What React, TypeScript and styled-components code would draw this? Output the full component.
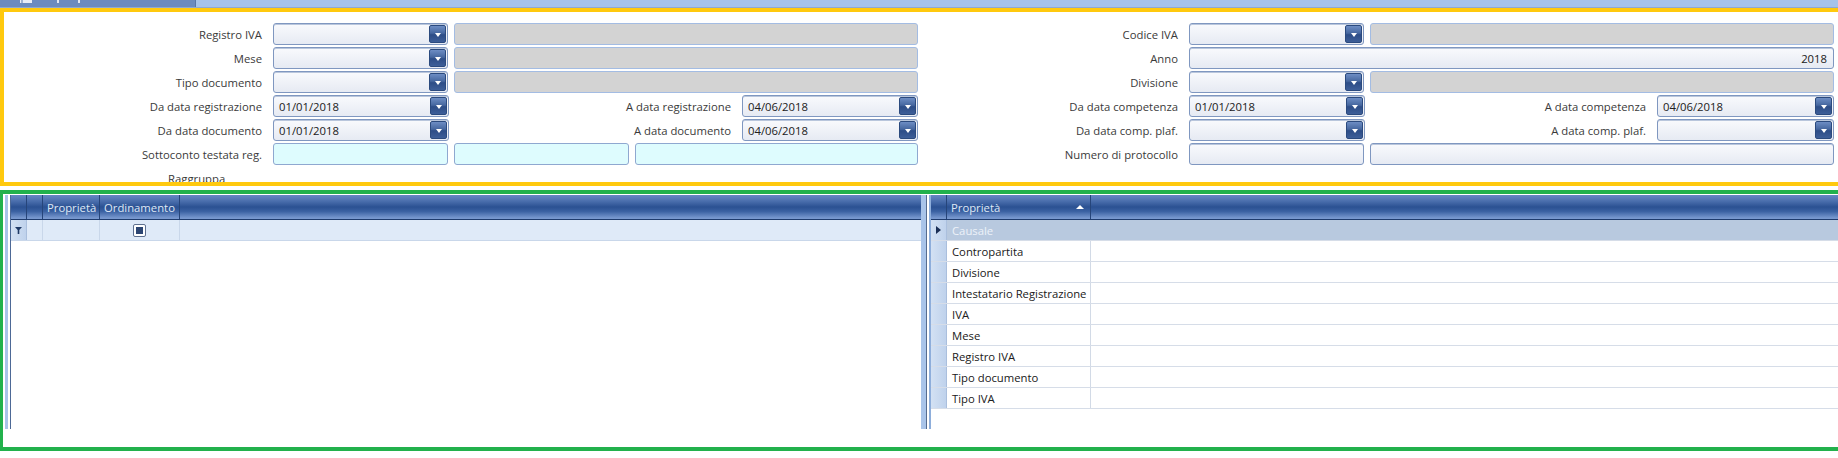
import styled, { createGlobalStyle } from "styled-components";

const GlobalStyle = createGlobalStyle`
  html, body {
    margin: 0;
    padding: 0;
    background: #ffffff;
    overflow: hidden;
  }
  body {
    font-family: "Open Sans", "Noto Sans", sans-serif;
    font-size: 11.3px;
    color: #333333;
  }
`;

const ui = {
  yellow: "#ffc90e",
  green: "#22b14c",
  label: "#3a3a3a",
  text: "#202020",
  headerText: "#dfe8f5",
  navy: "#26457a",
};

type Tone = "combo" | "gray" | "cyan" | "plain";

const Page = styled.div`
  width: 1838px;
  height: 458px;
  display: flex;
  flex-direction: column;
`;

const TabStrip = styled.div`
  height: 8px;
  flex: none;
  display: flex;
  background: #a6c3ea;
  border-bottom: 1px solid #8ea9d2;
  box-sizing: border-box;
`;

const Tab = styled.div`
  width: 195px;
  background: #6b8bbf;
  border-right: 1px solid #5876a8;
  display: flex;
  align-items: flex-start;
`;

const FilterPanel = styled.div`
  position: relative;
  height: 182px;
  flex: none;
  box-sizing: border-box;
  padding: 15px 0 0 4px;
  overflow: hidden;

  &::after {
    content: "";
    position: absolute;
    left: 0;
    top: 0;
    right: -10px;
    bottom: 4px;
    border: 4px solid ${ui.yellow};
    pointer-events: none;
  }
`;

const Halves = styled.div`
  display: grid;
  grid-template-columns: 914px 914px;
  column-gap: 2px;
`;

const FormHalf = styled.div`
  display: grid;
  grid-template-columns: 258px 645px;
  column-gap: 11px;
  row-gap: 2px;
  grid-auto-rows: 22px;
  align-items: center;
`;

const Label = styled.div`
  text-align: right;
  color: ${ui.label};
  white-space: nowrap;
`;

const FieldRow = styled.div<{ $cols: string; $gap?: number }>`
  display: grid;
  grid-template-columns: ${(p) => p.$cols};
  column-gap: ${(p) => p.$gap ?? 6}px;
  align-items: center;
  height: 22px;
`;

const Field = styled.div<{ $tone: Tone; $right?: boolean }>`
  height: 22px;
  box-sizing: border-box;
  border-radius: 3px;
  border: 1px solid
    ${(p) => (p.$tone === "gray" ? "#a3bce3" : p.$tone === "cyan" ? "#8fa8d0" : "#7f97c0")};
  background: ${(p) =>
    p.$tone === "gray"
      ? "#d3d3d3"
      : p.$tone === "cyan"
      ? "#defcfe"
      : "linear-gradient(#f9fafd, #e6eaf3)"};
  box-shadow: ${(p) => (p.$tone === "combo" || p.$tone === "plain" ? "inset 0 1px 0 #b9c6dc" : "none")};
  display: flex;
  align-items: center;
  justify-content: ${(p) => (p.$right ? "flex-end" : "flex-start")};
  padding: 0 ${(p) => (p.$right ? 6 : 1)}px 0 5px;
  color: ${ui.text};
  white-space: nowrap;
`;

const DropButton = styled.span`
  margin-left: auto;
  width: 17px;
  height: 18px;
  box-sizing: border-box;
  border-radius: 2px;
  border: 1px solid #2b4a7e;
  background: linear-gradient(#6d8dc4, #46679f 45%, #2d4d87 55%, #3d5e98);
  display: flex;
  align-items: center;
  justify-content: center;

  &::after {
    content: "";
    margin-top: 1px;
    border-left: 3.5px solid transparent;
    border-right: 3.5px solid transparent;
    border-top: 4px solid #ffffff;
  }
`;

const GroupLabel = styled.div`
  margin: 6px 0 0 164px;
  color: ${ui.label};
`;

const GridSection = styled.div`
  position: relative;
  height: 261px;
  flex: none;
  box-sizing: border-box;
  padding: 5px 0 0 5px;

  &::after {
    content: "";
    position: absolute;
    left: 0;
    top: 0;
    right: -10px;
    bottom: 0;
    border: 4px solid ${ui.green};
    border-left-width: 3px;
    pointer-events: none;
  }
`;

const GridsRow = styled.div`
  display: flex;
  height: 234px;
`;

const LeftGrid = styled.div`
  width: 916px;
  flex: none;
  box-sizing: border-box;
  border-left: 3px solid #a9c4e9;
  padding-left: 2px;
`;

const GridBody = styled.div`
  height: 100%;
  border-left: 1px solid #4d6996;
`;

const Splitter = styled.div`
  width: 10px;
  flex: none;
  background: linear-gradient(
    to right,
    #a9c4e9 0 5px,
    #566c8f 5px 6px,
    #ffffff 6px 8px,
    #8eaedb 8px 10px
  );
`;

const RightGrid = styled.div`
  flex: 1;
  min-width: 0;
`;

const HeaderRow = styled.div<{ $cols: string }>`
  display: grid;
  grid-template-columns: ${(p) => p.$cols};
  height: 25px;
  box-sizing: border-box;
  border-bottom: 1px solid #1f3c6e;
  background: linear-gradient(#6687c3 0%, #4b6fad 25%, #2b5192 50%, #3a61a2 68%, #7898cf 96%);
`;

const HeaderCell = styled.div`
  display: flex;
  align-items: center;
  padding: 0 4px;
  border-right: 1px solid ${ui.navy};
  color: ${ui.headerText};
  white-space: nowrap;
  &:last-child {
    border-right: none;
  }
`;

const SortArrow = styled.span`
  margin-left: auto;
  margin-right: 2px;
  border-left: 4px solid transparent;
  border-right: 4px solid transparent;
  border-bottom: 4px solid #ffffff;
`;

const DataRow = styled.div<{ $cols: string; $selected?: boolean; $filter?: boolean }>`
  display: grid;
  grid-template-columns: ${(p) => p.$cols};
  height: 21px;
  box-sizing: border-box;
  border-bottom: 1px solid ${(p) => (p.$filter ? "#c9d7ea" : "#d6dde8")};
  background: ${(p) => (p.$selected ? "#b8c9df" : p.$filter ? "#dfeaf8" : "#ffffff")};
  color: ${(p) => (p.$selected ? "#edf2f9" : ui.text)};
`;

const Cell = styled.div<{ $line?: string }>`
  display: flex;
  align-items: center;
  padding: 0 5px;
  white-space: nowrap;
  border-right: 1px solid ${(p) => p.$line ?? "#d2dae6"};
  &:last-child {
    border-right: none;
  }
`;

const Indicator = styled.div`
  display: flex;
  align-items: center;
  justify-content: center;
  background: linear-gradient(to right, #d3e1f3, #bfd2ec);
  border-right: 1px solid #aabfdd;
`;

const CenterCell = styled(Cell)`
  justify-content: center;
  padding: 0;
`;

const CheckBox = styled.span`
  width: 13px;
  height: 13px;
  box-sizing: border-box;
  border: 1px solid #5f7190;
  border-radius: 2px;
  background: #ffffff;
  padding: 2px;
  display: flex;

  &::after {
    content: "";
    flex: 1;
    background: #2d4672;
  }
`;

const leftCols = "16px 16px 57px 80px 1fr";
const rightCols = "16px 144px 1fr";

function Combo({ value }: { value?: string }) {
  return (
    <Field $tone="combo">
      {value}
      <DropButton />
    </Field>
  );
}

function TabIcon() {
  return (
    <svg width="120" height="4" viewBox="0 0 120 4">
      <rect x="20" y="0" width="12" height="3" fill="#e9eef7" />
      <rect x="21" y="0" width="2" height="3" fill="#9fb3d3" />
      <rect x="57" y="0" width="2" height="3" fill="#dfe7f3" />
      <rect x="78" y="0" width="2" height="3" fill="#dfe7f3" />
    </svg>
  );
}

function FilterIcon() {
  return (
    <svg width="7" height="7" viewBox="0 0 7 7">
      <polygon points="0,0 7,0 4.3,3 4.3,7 2.7,7 2.7,3" fill="#1f3a66" />
    </svg>
  );
}

function RowPointer() {
  return (
    <svg width="5" height="8" viewBox="0 0 5 8">
      <polygon points="0,0 5,4 0,8" fill="#1b2f55" />
    </svg>
  );
}

const groupProps = [
  "Causale",
  "Contropartita",
  "Divisione",
  "Intestatario Registrazione",
  "IVA",
  "Mese",
  "Registro IVA",
  "Tipo documento",
  "Tipo IVA",
];

export default function App() {
  return (
    <Page>
      <GlobalStyle />
      <TabStrip>
        <Tab>
          <TabIcon />
        </Tab>
      </TabStrip>

      <FilterPanel>
        <Halves>
          <FormHalf>
            <Label>Registro IVA</Label>
            <FieldRow $cols="175px 1fr">
              <Combo />
              <Field $tone="gray" />
            </FieldRow>

            <Label>Mese</Label>
            <FieldRow $cols="175px 1fr">
              <Combo />
              <Field $tone="gray" />
            </FieldRow>

            <Label>Tipo documento</Label>
            <FieldRow $cols="175px 1fr">
              <Combo />
              <Field $tone="gray" />
            </FieldRow>

            <Label>Da data registrazione</Label>
            <FieldRow $cols="176px 1fr 176px" $gap={11}>
              <Combo value="01/01/2018" />
              <Label>A data registrazione</Label>
              <Combo value="04/06/2018" />
            </FieldRow>

            <Label>Da data documento</Label>
            <FieldRow $cols="176px 1fr 176px" $gap={11}>
              <Combo value="01/01/2018" />
              <Label>A data documento</Label>
              <Combo value="04/06/2018" />
            </FieldRow>

            <Label>Sottoconto testata reg.</Label>
            <FieldRow $cols="175px 175px 1fr">
              <Field $tone="cyan" />
              <Field $tone="cyan" />
              <Field $tone="cyan" />
            </FieldRow>
          </FormHalf>

          <FormHalf>
            <Label>Codice IVA</Label>
            <FieldRow $cols="175px 1fr">
              <Combo />
              <Field $tone="gray" />
            </FieldRow>

            <Label>Anno</Label>
            <Field $tone="plain" $right>
              2018
            </Field>

            <Label>Divisione</Label>
            <FieldRow $cols="175px 1fr">
              <Combo />
              <Field $tone="gray" />
            </FieldRow>

            <Label>Da data competenza</Label>
            <FieldRow $cols="176px 1fr 177px" $gap={11}>
              <Combo value="01/01/2018" />
              <Label>A data competenza</Label>
              <Combo value="04/06/2018" />
            </FieldRow>

            <Label>Da data comp. plaf.</Label>
            <FieldRow $cols="176px 1fr 177px" $gap={11}>
              <Combo />
              <Label>A data comp. plaf.</Label>
              <Combo />
            </FieldRow>

            <Label>Numero di protocollo</Label>
            <FieldRow $cols="175px 1fr">
              <Field $tone="plain" />
              <Field $tone="plain" />
            </FieldRow>
          </FormHalf>
        </Halves>
        <GroupLabel>Raggruppa</GroupLabel>
      </FilterPanel>

      <GridSection>
        <GridsRow>
          <LeftGrid>
            <GridBody>
              <HeaderRow $cols={leftCols}>
                <HeaderCell />
                <HeaderCell />
                <HeaderCell>Proprietà</HeaderCell>
                <HeaderCell>Ordinamento</HeaderCell>
                <HeaderCell />
              </HeaderRow>
              <DataRow $cols={leftCols} $filter>
                <Indicator>
                  <FilterIcon />
                </Indicator>
                <Cell $line="#c9d7ea" />
                <Cell $line="#c9d7ea" />
                <CenterCell $line="#c9d7ea">
                  <CheckBox />
                </CenterCell>
                <Cell />
              </DataRow>
            </GridBody>
          </LeftGrid>

          <Splitter />

          <RightGrid>
            <HeaderRow $cols={rightCols}>
              <HeaderCell />
              <HeaderCell>
                Proprietà
                <SortArrow />
              </HeaderCell>
              <HeaderCell />
            </HeaderRow>
            {groupProps.map((name, i) => (
              <DataRow key={name} $cols={rightCols} $selected={i === 0}>
                <Indicator>{i === 0 && <RowPointer />}</Indicator>
                <Cell $line={i === 0 ? "#b8c9df" : "#d2dae6"}>{name}</Cell>
                <Cell />
              </DataRow>
            ))}
          </RightGrid>
        </GridsRow>
      </GridSection>
    </Page>
  );
}
